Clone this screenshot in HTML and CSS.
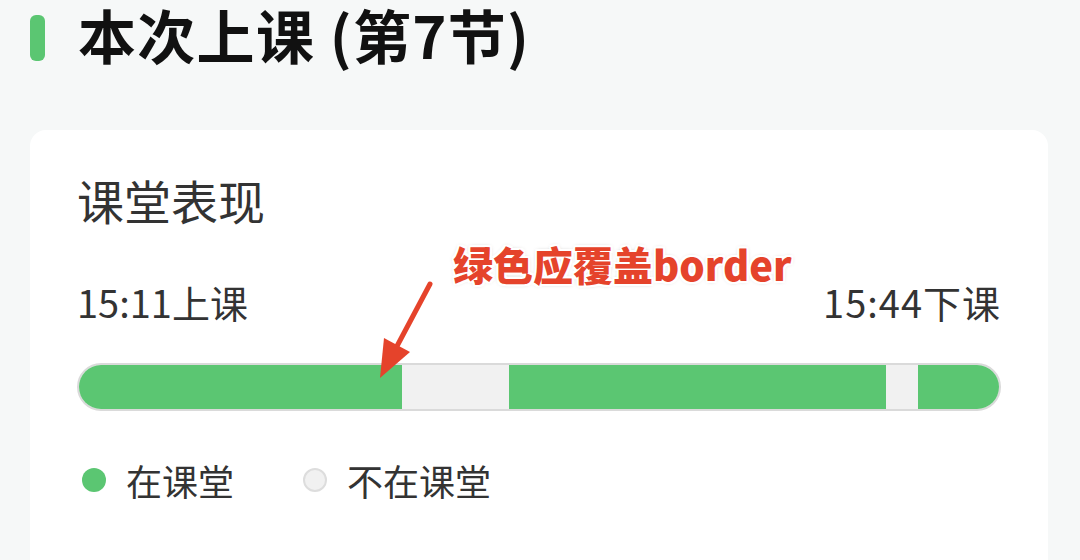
FILE: index.html
```html
<!DOCTYPE html>
<html>
<head>
  <meta charset="utf-8">
  <title>本次上课</title>
  <link rel="stylesheet" href="styles.css">
</head>
<body>
  <div class="section-title">
    <span class="title-mark"></span>
    <h1>本次上课 (第7节)</h1>
  </div>

  <div class="card">
    <h2>课堂表现</h2>
    <div class="times">
      <span>15:11上课</span>
      <span>15:44下课</span>
    </div>
    <div class="timeline">
      <span class="seg on" style="width:35.11%"></span>
      <span class="seg off" style="width:11.63%"></span>
      <span class="seg on" style="width:40.98%"></span>
      <span class="seg off" style="width:3.48%"></span>
      <span class="seg on" style="width:8.80%"></span>
    </div>
    <div class="legend">
      <span class="legend-item"><i class="dot on"></i>在课堂</span>
      <span class="legend-item"><i class="dot off"></i>不在课堂</span>
    </div>
  </div>

  <!-- review note drawn over the screenshot -->
  <div class="note">绿色应覆盖border</div>
  <svg class="note-arrow" width="80" height="110" viewBox="0 0 80 110">
    <line x1="60" y1="6" x2="26" y2="70" stroke="#e5432b" stroke-width="5" stroke-linecap="round"/>
    <polygon points="10,100 14,60 40,74" fill="#e5432b"/>
  </svg>
</body>
</html>
```

FILE: styles.css
```css
html, body { margin: 0; padding: 0; }

body {
  background: #f6f8f8;
  font-family: "Noto Sans CJK SC", "Noto Sans", sans-serif;
  color: #333;
  position: relative;
}

.section-title {
  display: flex;
  align-items: flex-start;
  height: 78px;
  padding-left: 30px;
}

.title-mark {
  width: 15px;
  height: 46px;
  margin-top: 15px;
  border-radius: 6px;
  background: #5bc672;
  margin-right: 33px;
}

.section-title h1 {
  margin: 0;
  font-size: 58px;
  font-weight: 700;
  line-height: 68px;
  letter-spacing: 1.3px;
  color: #111;
}

.card {
  margin: 52px 0 0 30px;
  width: 1018px;
  height: 430px;
  box-sizing: border-box;
  background: #fff;
  border-radius: 16px 16px 0 0;
  padding: 38px 47px 0 47px;
}

.card h2 {
  margin: 0;
  font-size: 47px;
  font-weight: 400;
  line-height: 64px;
  color: #333;
}

.times {
  display: flex;
  justify-content: space-between;
  margin-top: 44px;
  font-size: 38px;
  line-height: 52px;
  color: #333;
}

.times span:last-child { letter-spacing: 1px; }

.timeline {
  display: flex;
  margin-top: 35px;
  height: 48px;
  box-sizing: border-box;
  border: 2px solid #dadada;
  border-radius: 24px;
  background: #f1f1f1;
  overflow: hidden;
}

.seg { display: block; height: 100%; }
.seg.on { background: #5bc672; }
.seg.off { background: #f1f1f1; }

.legend {
  display: flex;
  align-items: center;
  margin-top: 44px;
  font-size: 36px;
  line-height: 50px;
  color: #333;
}

.legend-item {
  display: flex;
  align-items: center;
  margin-right: 64px;
}

.dot {
  width: 24px;
  height: 24px;
  border-radius: 50%;
  margin: 0 20px 0 5px;
  box-sizing: border-box;
}
.dot.on { background: #5bc672; }
.dot.off { background: #f1f1f1; border: 2px solid #dddddd; }

.note {
  position: absolute;
  left: 453px;
  top: 238px;
  font-size: 40px;
  font-weight: 900;
  line-height: 52px;
  color: #e5432b;
  text-shadow:
    2px 0 0 #fff, -2px 0 0 #fff, 0 2px 0 #fff, 0 -2px 0 #fff,
    2px 2px 0 #fff, -2px -2px 0 #fff, 2px -2px 0 #fff, -2px 2px 0 #fff,
    0 0 4px rgba(0, 0, 0, 0.35);
}

.note-arrow {
  position: absolute;
  left: 370px;
  top: 278px;
}
```
